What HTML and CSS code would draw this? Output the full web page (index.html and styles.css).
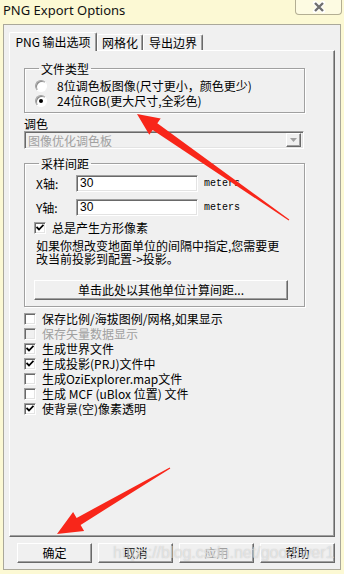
FILE: index.html
```html
<!DOCTYPE html>
<html lang="zh-CN">
<head>
    <meta charset="UTF-8">
    <title>PNG Export Options</title>
    <link rel="stylesheet" href="styles.css">
</head>
<body>
    <div class="window">
        <div class="titlebar">
            <span class="title">PNG Export Options</span>
            <div class="close">
                <svg width="14" height="12" viewBox="0 0 14 12">
                    <path d="M3 2 L11 10 M11 2 L3 10" stroke="#fff" stroke-width="4.5" stroke-linecap="round"/>
                    <path d="M3 2 L11 10 M11 2 L3 10" stroke="#6f6f6f" stroke-width="2.4"/>
                </svg>
            </div>
        </div>

        <div class="dialog">
            <div class="tabs">
                <div class="tab active">PNG 输出选项</div>
                <div class="tab tab-grid">网格化</div>
                <div class="tab tab-bounds">导出边界</div>
            </div>

            <div class="panel">
                <fieldset class="group group-type">
                    <legend>文件类型</legend>
                    <div class="option"><span class="radio"></span>8位调色板图像(尺寸更小，颜色更少)</div>
                    <div class="option"><span class="radio on"></span>24位RGB(更大尺寸,全彩色)</div>
                </fieldset>

                <div class="caption">调色</div>
                <div class="combo">
                    <span class="combo-text">图像优化调色板</span>
                    <span class="combo-drop">
                        <svg width="7" height="4" viewBox="0 0 7 4"><path d="M0 0 H7 L3.5 4 Z" fill="#a0a0a0"/></svg>
                    </span>
                </div>

                <fieldset class="group group-spacing">
                    <legend>采样间距</legend>
                    <div class="axis">
                        <span class="axis-label">X轴:</span>
                        <span class="field">30</span>
                        <span class="unit">meters</span>
                    </div>
                    <div class="axis">
                        <span class="axis-label">Y轴:</span>
                        <span class="field">30</span>
                        <span class="unit">meters</span>
                    </div>
                    <div class="option">
                        <span class="check on"><svg width="8" height="7" viewBox="0 0 8 7"><path d="M0.5 3 L3 5.5 L7.5 0.8" stroke="#000" stroke-width="1.8" fill="none"/></svg></span>总是产生方形像素
                    </div>
                    <p class="note">如果你想改变地面单位的间隔中指定,您需要更改当前投影到配置->投影。</p>
                    <div class="btn wide">单击此处以其他单位计算间距...</div>
                </fieldset>

                <div class="checks">
                    <div class="option"><span class="check"></span>保存比例/海拔图例/网格,如果显示</div>
                    <div class="option disabled"><span class="check"></span>保存矢量数据显示</div>
                    <div class="option"><span class="check on"><svg width="8" height="7" viewBox="0 0 8 7"><path d="M0.5 3 L3 5.5 L7.5 0.8" stroke="#000" stroke-width="1.8" fill="none"/></svg></span>生成世界文件</div>
                    <div class="option"><span class="check on"><svg width="8" height="7" viewBox="0 0 8 7"><path d="M0.5 3 L3 5.5 L7.5 0.8" stroke="#000" stroke-width="1.8" fill="none"/></svg></span>生成投影(PRJ)文件中</div>
                    <div class="option"><span class="check"></span>生成OziExplorer.map文件</div>
                    <div class="option"><span class="check"></span>生成 MCF (uBlox 位置) 文件</div>
                    <div class="option"><span class="check on"><svg width="8" height="7" viewBox="0 0 8 7"><path d="M0.5 3 L3 5.5 L7.5 0.8" stroke="#000" stroke-width="1.8" fill="none"/></svg></span>使背景(空)像素透明</div>
                </div>
            </div>

            <div class="buttons">
                <div class="btn">确定</div>
                <div class="btn">取消</div>
                <div class="btn off">应用</div>
                <div class="btn">帮助</div>
            </div>
        </div>

        <!-- 截图上的标注箭头 -->
        <svg class="marks" width="344" height="574" viewBox="0 0 344 574">
            <polygon fill="#f8261a" points="137,114 160.7,118.4 157.3,123.3 289.3,219.6 288.7,220.4 152.7,129.9 149.3,134.8"/>
            <polygon fill="#f8261a" points="57,534 84.1,530.9 80.6,524.9 170.3,468.4 169.7,467.6 76.6,517.9 73.1,511.9"/>
        </svg>
        <div class="watermark">https://blog.csdn.net/goodlwer1</div>
    </div>
</body>
</html>
```

FILE: styles.css
```css
* {
    box-sizing: border-box;
}
body {
    margin: 0;
    background: #fcf9d4;
    font-family: "Noto Sans CJK SC", "Noto Sans", sans-serif;
    font-size: 12px;
    color: #000;
}
.window {
    position: relative;
    width: 344px;
    height: 574px;
    background: #fcf9d4;
    overflow: hidden;
}
.titlebar {
    height: 24px;
    display: flex;
    justify-content: space-between;
    align-items: flex-start;
    padding-left: 3px;
}
.title {
    font-family: "Noto Sans", sans-serif;
    font-size: 13px;
    line-height: 20px;
    color: #111;
}
.close {
    width: 47px;
    height: 15px;
    margin-right: 2px;
    border: 1px solid #b3ae93;
    border-top: none;
    border-radius: 0 0 4px 4px;
    background: #fdfbe2;
    display: flex;
    justify-content: center;
    align-items: center;
}
.dialog {
    height: 546px;
    margin: 0 3px;
    background: #f0f0f0;
    border: 1px solid #aaa89a;
    padding: 7px 5px 0 5px;
}
.tabs {
    position: relative;
    z-index: 1;
    height: 19px;
    margin-bottom: -1px;
    display: flex;
    align-items: flex-end;
}
.tab {
    height: 16px;
    margin-bottom: 1px;
    border: 1px solid;
    border-color: #fff #696969 transparent #fff;
    border-bottom: none;
    border-radius: 2px 2px 0 0;
    box-shadow: inset -1px 0 #a0a0a0;
    background: #f0f0f0;
    text-align: center;
    line-height: 15px;
}
.tab.active {
    width: 88px;
    height: 19px;
    margin-bottom: 0;
    line-height: 17px;
}
.tab-grid {
    width: 46px;
}
.tab-bounds {
    width: 60px;
}
.panel {
    height: 487px;
    border: 1px solid;
    border-color: #fff #696969 #696969 #fff;
    box-shadow: inset -1px -1px #a0a0a0;
    padding: 0 0 0 14px;
}
.group {
    width: 281px;
    margin: 0;
    border: 1px solid #a0a0a0;
    box-shadow: inset 1px 1px #fff, 1px 1px #fff;
    min-inline-size: 0;
}
.group legend {
    margin-left: 5px;
    padding: 0 2px;
    line-height: 13px;
}
.group-type {
    margin-top: 11px;
    padding: 3px 0 4px 9px;
}
.option {
    display: flex;
    align-items: center;
    gap: 6px;
    height: 15px;
    line-height: 15px;
    white-space: nowrap;
}
.option.disabled {
    color: #a0a0a0;
}
.radio {
    width: 12px;
    height: 12px;
    border-radius: 50%;
    border: 1px solid;
    border-color: #a0a0a0 #fff #fff #a0a0a0;
    box-shadow: inset 1px 1px #8a8a8a;
    background: #fff;
    display: flex;
    justify-content: center;
    align-items: center;
    margin: 0 4px 0 1px;
}
.radio.on::after {
    content: "";
    width: 4px;
    height: 4px;
    border-radius: 50%;
    background: #000;
}
.caption {
    margin-top: 5px;
    line-height: 12px;
}
.combo {
    width: 280px;
    height: 18px;
    margin-top: 1px;
    border: 1px solid;
    border-color: #a0a0a0 #fff #fff #a0a0a0;
    box-shadow: inset 1px 1px #696969, inset -1px -1px #e3e3e3;
    display: flex;
    justify-content: space-between;
    align-items: center;
    padding: 0 2px 0 3px;
    color: #a0a0a0;
}
.combo-drop {
    width: 15px;
    height: 14px;
    border: 1px solid;
    border-color: #fff #696969 #696969 #fff;
    box-shadow: inset -1px -1px #a0a0a0;
    display: flex;
    justify-content: center;
    align-items: center;
}
.group-spacing {
    margin-top: 8px;
    padding: 5px 0 6px 9px;
}
.axis {
    display: flex;
    align-items: center;
    height: 17px;
    margin-bottom: 7px;
    margin-left: 2px;
}
.axis-label {
    width: 40px;
}
.field {
    width: 122px;
    height: 17px;
    border: 1px solid;
    border-color: #a0a0a0 #fff #fff #a0a0a0;
    box-shadow: inset 1px 1px #696969, inset -1px -1px #e3e3e3;
    background: #fff;
    padding-left: 3px;
    font-family: "Liberation Sans", sans-serif;
    font-size: 12px;
    line-height: 15px;
}
.unit {
    margin-left: 6px;
    font-family: "Liberation Mono", monospace;
    font-size: 10px;
}
.check {
    width: 12px;
    height: 12px;
    border: 1px solid;
    border-color: #a0a0a0 #fff #fff #a0a0a0;
    box-shadow: inset 1px 1px #696969, inset -1px -1px #e3e3e3;
    background: #fff;
    display: flex;
    justify-content: center;
    align-items: center;
}
.disabled .check {
    background: #f0f0f0;
}
.group-spacing .option {
    height: 13px;
    margin-top: -2px;
}
.note {
    width: 252px;
    margin: 5px 0 0 2px;
    line-height: 13px;
}
.btn {
    height: 20px;
    border: 1px solid;
    border-color: #fff #696969 #696969 #fff;
    box-shadow: inset -1px -1px #a0a0a0;
    background: #f0f0f0;
    text-align: center;
    line-height: 18px;
}
.btn.wide {
    width: 254px;
    margin-top: 15px;
}
.btn.off {
    color: #a0a0a0;
}
.checks {
    margin-top: 4px;
}
.buttons {
    display: flex;
    gap: 6px;
    margin-top: 6px;
    padding-left: 8px;
}
.buttons .btn {
    width: 75px;
}
.marks {
    position: absolute;
    top: 0;
    left: 0;
    pointer-events: none;
}
.watermark {
    position: absolute;
    left: 113px;
    top: 543px;
    font-family: "Liberation Sans", sans-serif;
    font-size: 16px;
    line-height: 20px;
    color: rgba(255, 255, 255, 0.5);
    text-shadow: 0 0 1px rgba(140, 140, 140, 0.5);
    pointer-events: none;
}
```
